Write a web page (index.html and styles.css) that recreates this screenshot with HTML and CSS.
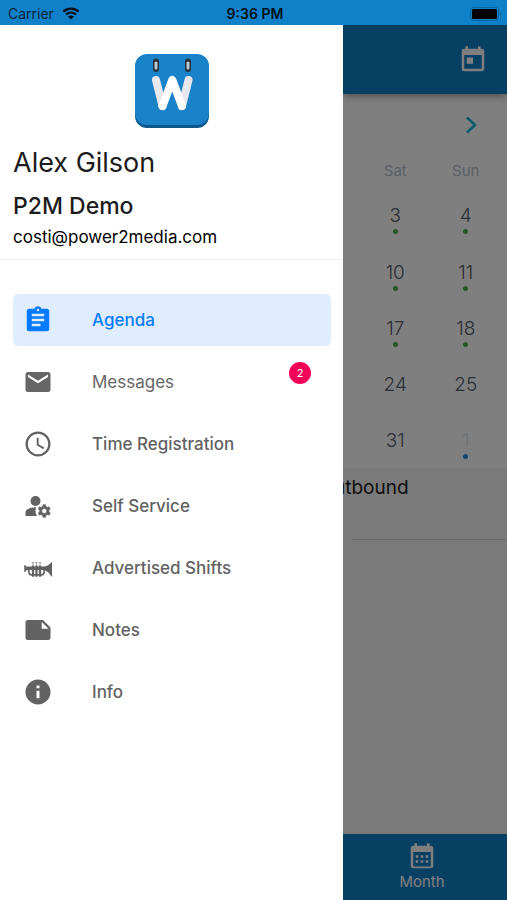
FILE: index.html
```html
<!DOCTYPE html>
<html lang="en">
<head>
<meta charset="utf-8">
<meta name="viewport" content="width=device-width, initial-scale=1">
<title>Agenda</title>
<link rel="stylesheet" href="styles.css">
</head>
<body>
<div class="status">
  <div class="status-left">
    <span>Carrier</span>
    <svg class="wifi" viewBox="0 0 18 13" aria-hidden="true">
      <path d="M1.4 4.6C5.8.6 12.2.6 16.6 4.6M4 7.5c2.900-2.600 7.100-2.600 10 0" fill="none" stroke="currentColor" stroke-width="2.300"/>
      <path d="M9 12.600 5.900 9.500c1.800-1.500 4.400-1.500 6.200 0z" fill="currentColor"/>
    </svg>
  </div>
  <span class="clock">9:36 PM</span>
  <svg class="battery" viewBox="0 0 32 14" aria-hidden="true">
    <rect x=".5" y=".5" width="28" height="13" rx="3" fill="none" stroke="#0a659d"/>
    <rect x="2" y="2" width="25" height="10" rx="1.500" fill="#000"/>
    <path d="M30 5c1.700.6 1.700 3.400 0 4z" fill="#0a659d"/>
  </svg>
</div>

<div class="app">
  <aside class="drawer">
    <header class="profile">
      <svg class="logo" viewBox="0 0 74 74" role="img" aria-label="App logo">
        <rect x="0" y="1" width="74" height="73" rx="12" fill="#0d5789"/>
        <rect x="0" y="0" width="74" height="71" rx="12" fill="#1982c8"/>
        <g fill="none" stroke-linecap="round" stroke-linejoin="round" stroke-width="8">
          <path d="M21 26 27.500 52M53.500 26 47 52" stroke="#e6e8ee"/>
          <path d="M27.500 52 37.300 26 47 52" stroke="#fff"/>
        </g>
        <rect x="18" y="4.500" width="6" height="13.500" rx="3" fill="#26323c"/>
        <rect x="50" y="4.500" width="6" height="13.500" rx="3" fill="#26323c"/>
        <rect x="19.500" y="7.500" width="3" height="8" rx="1.500" fill="#c3c8cc"/>
        <rect x="51.500" y="7.500" width="3" height="8" rx="1.500" fill="#c3c8cc"/>
      </svg>
      <h1 class="name">Alex Gilson</h1>
      <p class="company">P2M Demo</p>
      <p class="email">costi@power2media.com</p>
    </header>
    <nav class="menu">
      <a class="item active" href="#agenda" aria-current="page">
        <svg class="icon" viewBox="0 0 24 24" aria-hidden="true"><path fill="currentColor" d="M19 3h-4.180C14.400 1.840 13.300 1 12 1s-2.400.84-2.820 2H5a2 2 0 0 0-2 2v14a2 2 0 0 0 2 2h14a2 2 0 0 0 2-2V5a2 2 0 0 0-2-2zm-7 0a1 1 0 1 1 0 2 1 1 0 0 1 0-2zm2 14H7v-2h7zm3-4H7v-2h10zm0-4H7V7h10z"/></svg>
        <span>Agenda</span>
      </a>
      <a class="item unread" href="#messages">
        <svg class="icon" viewBox="0 0 24 24" aria-hidden="true"><path fill="currentColor" d="M20 4H4a2 2 0 0 0-2 2v12a2 2 0 0 0 2 2h16a2 2 0 0 0 2-2V6a2 2 0 0 0-2-2zm0 4-8 5-8-5V6l8 5 8-5z"/></svg>
        <span>Messages</span>
        <span class="badge">2</span>
      </a>
      <a class="item" href="#time">
        <svg class="icon" viewBox="0 0 24 24" aria-hidden="true"><g fill="none" stroke="currentColor"><circle cx="12" cy="12" r="9.100" stroke-width="1.800"/><path stroke-width="1.500" d="M11.750 7v5.600l4.900 2.900"/></g></svg>
        <span>Time Registration</span>
      </a>
      <a class="item" href="#self-service">
        <svg class="icon" viewBox="0 0 24 24" aria-hidden="true">
          <circle cx="10" cy="8" r="4" fill="currentColor"/>
          <path fill="currentColor" d="M10.670 13.020C10.450 13.010 10.230 13 10 13c-2.420 0-4.680.67-6.610 1.820C2.510 15.340 2 16.320 2 17.350V20h9.260A6.960 6.960 0 0 1 10 16c0-1.070.25-2.070.67-2.980z"/>
          <path fill="currentColor" stroke="currentColor" stroke-width=".5" d="M20.750 16c0-.22-.03-.42-.06-.63l1.140-1.010-1-1.730-1.450.49c-.32-.27-.68-.48-1.080-.63L18 11h-2l-.3 1.490c-.4.150-.76.360-1.080.63l-1.450-.49-1 1.730 1.140 1.010c-.03.210-.06.410-.06.630s.03.420.06.630l-1.140 1.010 1 1.730 1.450-.49c.32.270.68.480 1.080.63L16 21h2l.3-1.490c.4-.15.760-.36 1.080-.63l1.450.49 1-1.730-1.140-1.010c.03-.21.060-.41.060-.63zM17 18a2 2 0 1 1 0-4 2 2 0 0 1 0 4z"/>
        </svg>
        <span>Self Service</span>
      </a>
      <a class="item" href="#shifts">
        <svg class="icon" viewBox="0 0 24 24" aria-hidden="true">
          <path fill="currentColor" d="M1 9.500h.8l.6 1.200H16c3 0 5-1.200 6.700-3.400h.5v11.400h-.5C21 15.900 19 14 16 13.600H4.500l-2.100.4-.6 1.200H1z"/>
          <g fill="none" stroke="currentColor"><path stroke-width="1.300" d="M4.700 13v2c0 1.800.8 2.500 2.200 2.500h7.800c1.500 0 2.200-.7 2.200-2.500v-2"/><path stroke-width="1.800" d="M8 10v9M10.800 10v9M13.600 10v9"/><path stroke-width=".7" opacity=".6" d="M8 7.500V10M10.800 7.500V10M13.600 7.500V10M7 7.700h2M9.800 7.700h2M12.600 7.700h2"/></g>
        </svg>
        <span>Advertised Shifts</span>
      </a>
      <a class="item" href="#notes">
        <svg class="icon" viewBox="0 0 24 24" aria-hidden="true"><path fill="currentColor" d="M22 10 16 4H4a2 2 0 0 0-2 2v12a2 2 0 0 0 2 2h16a2 2 0 0 0 2-2zm-7-4.500 5.500 5.500H15z"/></svg>
        <span>Notes</span>
      </a>
      <a class="item" href="#info">
        <svg class="icon" viewBox="0 0 24 24" aria-hidden="true"><path fill="currentColor" d="M12 2a10 10 0 1 0 0 20 10 10 0 0 0 0-20zm1.200 15h-2.400v-6h2.400zm0-8h-2.400V6.800h2.400z"/></svg>
        <span>Info</span>
      </a>
    </nav>
  </aside>

  <main class="page">
    <header class="toolbar">
      <button class="tool" type="button" aria-label="Today">
        <svg class="icon" viewBox="0 0 24 24" aria-hidden="true"><path fill="currentColor" d="M19 3h-1V1h-2v2H8V1H6v2H5a2 2 0 0 0-2 2v14a2 2 0 0 0 2 2h14a2 2 0 0 0 2-2V5a2 2 0 0 0-2-2zm0 16H5V8h14zM7 10h5v5H7z"/></svg>
      </button>
    </header>
    <section class="calendar">
      <div class="pager">
        <button class="next" type="button" aria-label="Next month">
          <svg class="chevron" viewBox="0 0 12 18" aria-hidden="true"><path fill="none" stroke="currentColor" stroke-width="2.400" d="m2 1.500 8 7.500-8 7.500"/></svg>
        </button>
      </div>
      <table class="days">
        <thead><tr><th>Sat</th><th>Sun</th></tr></thead>
        <tbody>
          <tr><td><span class="day dot">3</span></td><td><span class="day dot">4</span></td></tr>
          <tr><td><span class="day dot">10</span></td><td><span class="day dot">11</span></td></tr>
          <tr><td><span class="day dot">17</span></td><td><span class="day dot">18</span></td></tr>
          <tr><td><span class="day">24</span></td><td><span class="day">25</span></td></tr>
          <tr><td><span class="day">31</span></td><td><span class="day dot outside">1</span></td></tr>
        </tbody>
      </table>
    </section>
    <section class="events">
      <div class="event"><p class="event-title">utbound</p></div>
    </section>
    <nav class="tabs">
      <a class="tab" href="#month">
        <svg class="icon" viewBox="0 0 24 24" aria-hidden="true"><path fill="currentColor" d="M19 3h-1V1h-2v2H8V1H6v2H5a2 2 0 0 0-2 2v14a2 2 0 0 0 2 2h14a2 2 0 0 0 2-2V5a2 2 0 0 0-2-2zm0 16.500H5V8h14zM7 10.500h2v2H7zm4 0h2v2h-2zm4 0h2v2h-2zM7 14.500h2v2H7zm4 0h2v2h-2zm4 0h2v2h-2z"/></svg>
        <span>Month</span>
      </a>
    </nav>
  </main>
</div>
</body>
</html>
```
FILE: styles.css
```css
* {
  box-sizing: border-box;
}

body {
  margin: 0;
  min-height: 100vh;
  display: flex;
  flex-direction: column;
  font-family: Inter, "Liberation Sans", sans-serif;
  color: #1c1c1c;
  background: #fff;
}

h1,
p {
  margin: 0;
}

a {
  text-decoration: none;
}

button {
  display: flex;
  padding: 0;
  border: 0;
  background: none;
}

.icon {
  width: 30px;
  height: 30px;
  flex: none;
}

/* Status bar */
.status {
  display: grid;
  grid-template-columns: 1fr auto 1fr;
  align-items: center;
  height: 25px;
  padding: 2px 5px 0 8px;
  background: #1081c8;
  color: #06263b;
  font-size: 14px;
}

.status-left {
  display: flex;
  align-items: center;
  gap: 8px;
}

.wifi {
  width: 18px;
  height: 13px;
  color: #021019;
}

.clock {
  color: #021019;
  font-size: 14px;
  font-weight: 600;
}

.battery {
  width: 32px;
  height: 14px;
  justify-self: end;
}

.app {
  flex: 1;
  display: flex;
}

/* Drawer */
.drawer {
  flex: 0 0 343px;
  background: #fff;
}

.profile {
  padding: 29px 13px 11px;
  border-bottom: 1px solid #f0f0f0;
}

.logo {
  display: block;
  width: 74px;
  height: 74px;
  margin: 0 auto 17px;
}

.name {
  font-size: 27px;
  line-height: 36px;
  font-weight: 400;
}

.company {
  margin-top: 9px;
  font-size: 23px;
  line-height: 32px;
  font-weight: 500;
}

.email {
  margin-top: 4px;
  color: #000;
  font-size: 17px;
  line-height: 22px;
}

.menu {
  display: flex;
  flex-direction: column;
  gap: 10px;
  padding: 34px 12px 34px 13px;
}

.item {
  position: relative;
  display: flex;
  align-items: center;
  gap: 39px;
  height: 52px;
  padding: 0 10px;
  border-radius: 5px;
  color: #626262;
  font-size: 17px;
  font-weight: 500;
}

.active {
  background: #e0edff;
  color: #067bff;
}

.unread {
  color: #666;
  font-weight: 400;
}

.badge {
  position: absolute;
  top: 6px;
  right: 20px;
  width: 22px;
  height: 22px;
  border-radius: 50%;
  background: #f50057;
  color: #fff;
  font-size: 11px;
  font-weight: 400;
  line-height: 22px;
  text-align: center;
}

/* Page behind the drawer */
.page {
  position: relative;
  flex: 1;
  min-width: 0;
  display: flex;
  flex-direction: column;
  overflow: hidden;
  background: #f4f4f4;
}

.page::after {
  content: "";
  position: absolute;
  inset: 0;
  background: rgba(0, 0, 0, 0.5);
  pointer-events: none;
}

.toolbar {
  z-index: 0;
  display: flex;
  align-items: center;
  justify-content: flex-end;
  height: 69px;
  padding: 0 19px;
  background: #1081c8;
  box-shadow: 0 2px 8px rgba(0, 0, 0, 0.4);
}

.tool {
  color: #fff;
}

.calendar {
  padding: 0 6px 3px 17px;
  background: #fff;
}

.pager {
  display: flex;
  align-items: center;
  justify-content: flex-end;
  height: 62px;
  padding: 0 24px;
}

.next {
  color: #0ab4dc;
}

.chevron {
  width: 12px;
  height: 18px;
}

.days {
  width: 100%;
  table-layout: fixed;
  border-collapse: collapse;
  text-align: center;
}

.days th {
  height: 28px;
  padding: 0;
  color: #b6c1cd;
  font-size: 15px;
  font-weight: 400;
}

.days td {
  height: 57px;
  padding: 16px 0 0;
  vertical-align: top;
}

.days tr + tr td {
  height: 56px;
}

.day {
  display: flex;
  flex-direction: column;
  align-items: center;
  color: #56606a;
  font-size: 19px;
  font-weight: 300;
  line-height: 32px;
}

.dot::after {
  content: "";
  width: 5px;
  height: 5px;
  margin-top: -3px;
  border-radius: 50%;
  background: #4caf50;
}

.outside {
  color: #d9e1e8;
}

.outside::after {
  background: #2a8ee0;
}

.events {
  flex: 1;
  padding-left: 9px;
}

.event {
  height: 72px;
  padding-top: 6px;
  border-bottom: 1px solid #d8d8d8;
}

.event-title {
  margin-left: -18px;
  font-size: 19px;
  line-height: 28px;
}

.tabs {
  display: flex;
  justify-content: center;
  height: 66px;
  padding-right: 6px;
  background: #1081c8;
}

.tab {
  display: flex;
  flex-direction: column;
  align-items: center;
  gap: 1px;
  padding-top: 8px;
  color: #fff;
  font-size: 15px;
  line-height: 18px;
}
```
